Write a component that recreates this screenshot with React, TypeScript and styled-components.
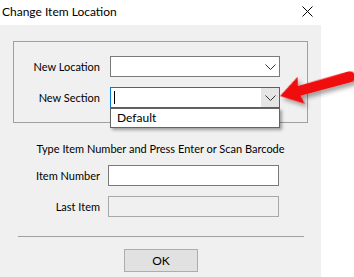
import React from 'react'
import styled, { createGlobalStyle } from 'styled-components'

const Global = createGlobalStyle`
  html, body {
    margin: 0;
    padding: 0;
    background: #fff;
  }
  body {
    font-family: Lato, "Liberation Sans", sans-serif;
    font-size: 11px;
    color: #000;
  }
`

const Page = styled.div`
  position: relative;
  width: 354px;
  height: 277px;
  overflow: hidden;
  background: #fff;
`

const Dialog = styled.div`
  width: 321px;
  height: 277px;
  display: flex;
  flex-direction: column;
`

const TitleBar = styled.div`
  height: 23px;
  flex: none;
  display: flex;
  align-items: center;
  justify-content: space-between;
  padding: 0 8px 2px 2px;
  background: #fff;
`

const Title = styled.span`
  font-size: 12px;
`

const Body = styled.div`
  flex: 1;
  background: #f0f0f0;
  display: flex;
  flex-direction: column;
`

const GroupBox = styled.div`
  margin: 16px 0 0 13px;
  width: 295px;
  height: 82px;
  box-sizing: border-box;
  border: 1px solid #a0a0a0;
  padding-top: 14px;
  display: grid;
  grid-template-columns: 86px 170px;
  column-gap: 10px;
  row-gap: 10px;
  align-content: start;
`

const FieldGrid = styled.div<{ left: number }>`
  display: grid;
  grid-template-columns: ${p => p.left}px 171px;
  column-gap: 8px;
  row-gap: 10px;
`

const Label = styled.label`
  text-align: right;
  align-self: center;
  white-space: nowrap;
  line-height: 21px;
`

const Combo = styled.div<{ focused?: boolean }>`
  position: relative;
  height: 21px;
  box-sizing: border-box;
  background: #fff;
  border: 1px solid ${p => (p.focused ? '#0078d7' : '#7a7a7a')};
  display: flex;
  align-items: center;
  justify-content: space-between;
  padding-left: 3px;
`

const Caret = styled.span`
  width: 1px;
  height: 13px;
  background: #000;
`

const DropButton = styled.div<{ hot?: boolean }>`
  width: 18px;
  height: 19px;
  display: flex;
  align-items: center;
  justify-content: center;
  background: ${p => (p.hot ? '#e5e5e5' : 'transparent')};
  margin-left: auto;
`

const DropList = styled.div`
  position: absolute;
  left: -1px;
  top: 20px;
  width: 170px;
  height: 20px;
  box-sizing: border-box;
  background: #fff;
  border: 1px solid #646464;
  box-shadow: 2px 2px 3px rgba(0, 0, 0, 0.35);
  padding-left: 6px;
  line-height: 18px;
  font-size: 12px;
  z-index: 2;
`

const Hint = styled.div`
  margin-top: 18px;
  text-align: center;
  width: 321px;
  line-height: 16px;
`

const Fields = styled.div`
  margin: 8px 0 0 0;
`

const TextBox = styled.div<{ disabled?: boolean }>`
  height: 21px;
  box-sizing: border-box;
  background: ${p => (p.disabled ? '#f0f0f0' : '#fff')};
  border: 1px solid ${p => (p.disabled ? '#a8a8a8' : '#7a7a7a')};
`

const Separator = styled.hr`
  margin: 19px 0 0 18px;
  width: 286px;
  border: none;
  border-top: 1px solid #a0a0a0;
  height: 0;
`

const Footer = styled.div`
  display: flex;
  margin-top: 12px;
  padding-left: 124px;
`

const Button = styled.button`
  width: 74px;
  height: 23px;
  box-sizing: border-box;
  background: #e1e1e1;
  border: 1px solid #adadad;
  font: inherit;
  font-size: 12px;
  color: #000;
  padding: 0;
`

const Overlay = styled.svg`
  position: absolute;
  left: 0;
  top: 0;
  pointer-events: none;
`

const Chevron = () => (
  <svg width="11" height="6" viewBox="0 0 11 6">
    <path d="M0.5 0.5 L5.5 5.5 L10.5 0.5" fill="none" stroke="#333" strokeWidth="1" />
  </svg>
)

const CloseIcon = () => (
  <svg width="11" height="11" viewBox="0 0 11 11">
    <path d="M0.5 0.5 L10.5 10.5 M10.5 0.5 L0.5 10.5" stroke="#000" strokeWidth="1" />
  </svg>
)

const App = () => (
  <Page>
    <Global />
    <Dialog>
      <TitleBar>
        <Title>Change Item Location</Title>
        <CloseIcon />
      </TitleBar>
      <Body>
        <GroupBox>
          <Label>New Location</Label>
          <Combo>
            <DropButton>
              <Chevron />
            </DropButton>
          </Combo>
          <Label>New Section</Label>
          <Combo focused>
            <Caret />
            <DropButton hot>
              <Chevron />
            </DropButton>
            <DropList>Default</DropList>
          </Combo>
        </GroupBox>
        <Hint>Type Item Number and Press Enter or Scan Barcode</Hint>
        <Fields>
          <FieldGrid left={100}>
            <Label>Item Number</Label>
            <TextBox />
            <Label>Last Item</Label>
            <TextBox disabled />
          </FieldGrid>
        </Fields>
        <Separator />
        <Footer>
          <Button>OK</Button>
        </Footer>
      </Body>
    </Dialog>
    <Overlay width="354" height="277">
      <defs>
        <filter id="sh" x="-20%" y="-20%" width="160%" height="180%">
          <feDropShadow dx="2" dy="4" stdDeviation="2" floodColor="#000" floodOpacity="0.35" />
        </filter>
      </defs>
      <g transform="translate(280 96) rotate(-15)" filter="url(#sh)">
        <path
          d="M0 0 L22 -14 L20 -5 L72 -6 Q78 -6 78 0 Q78 5 72 5 L20 5 L22 14 Z"
          fill="#f01010"
        />
      </g>
    </Overlay>
  </Page>
)

export default App
